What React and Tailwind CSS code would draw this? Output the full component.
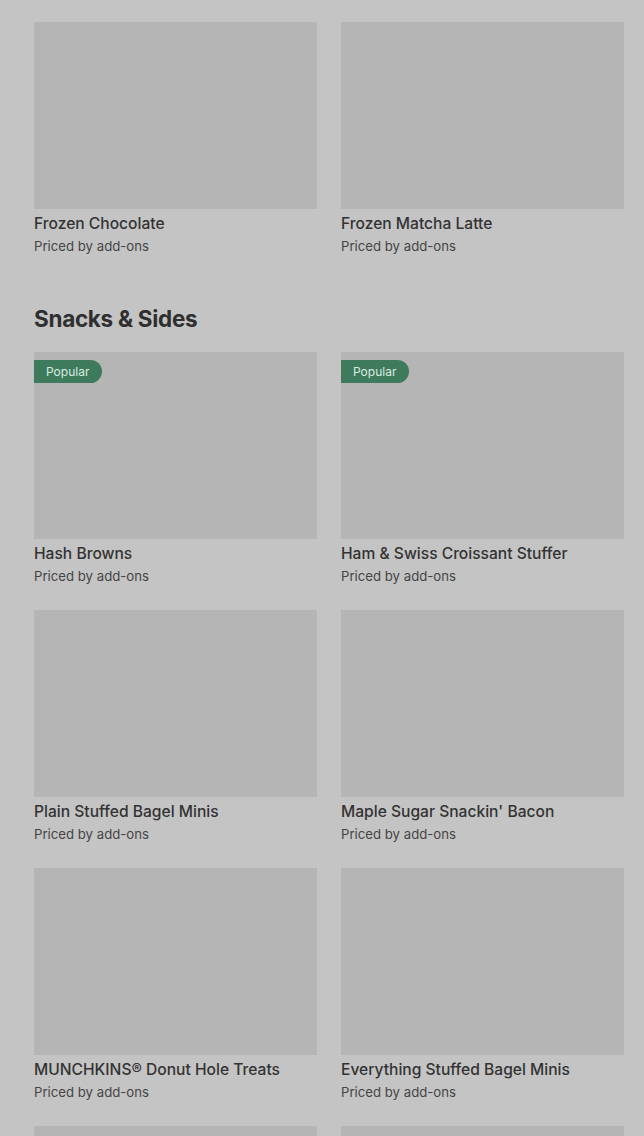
import React from 'react';

const frozen = [
  { name: 'Frozen Chocolate' },
  { name: 'Frozen Matcha Latte' },
];

const snacks = [
  { name: 'Hash Browns', popular: true },
  { name: 'Ham & Swiss Croissant Stuffer', popular: true },
  { name: 'Plain Stuffed Bagel Minis' },
  { name: "Maple Sugar Snackin' Bacon" },
  { name: 'MUNCHKINS® Donut Hole Treats' },
  { name: 'Everything Stuffed Bagel Minis' },
  { name: '' },
  { name: '' },
];

const ItemCard = ({ item }) => (
  <div className="flex flex-col">
    <div className="relative h-[187px] bg-[#b5b5b5]">
      {item.popular && (
        <span className="absolute left-0 top-[8px] h-[23px] pl-[12px] pr-[13px] flex items-center rounded-r-full bg-[#3e7a5c] text-[12px] text-[#d9ece1]">
          Popular
        </span>
      )}
    </div>
    {item.name && (
      <>
        <p className="mt-[4px] text-[15.6px] leading-[22px] font-medium text-[#333333]">{item.name}</p>
        <p className="mt-[1px] text-[13.2px] leading-[20px] text-[#444444]">Priced by add-ons</p>
      </>
    )}
  </div>
);

export default function App() {
  return (
    <div className="min-h-screen h-[1136px] overflow-hidden bg-[#c4c4c4] pl-[34px] pr-[20px] pt-[22px]" style={{ fontFamily: 'Inter, "Noto Sans", sans-serif' }}>
      <div className="grid grid-cols-2 gap-6">
        {frozen.map((item) => (
          <ItemCard key={item.name} item={item} />
        ))}
      </div>

      <h2 className="mt-[47px] mb-[17px] text-[22.5px] leading-[32px] font-bold tracking-[-0.3px] text-[#2f2f2f]">
        Snacks &amp; Sides
      </h2>

      <div className="grid grid-cols-2 gap-6">
        {snacks.map((item, i) => (
          <ItemCard key={i} item={item} />
        ))}
      </div>
    </div>
  );
}
